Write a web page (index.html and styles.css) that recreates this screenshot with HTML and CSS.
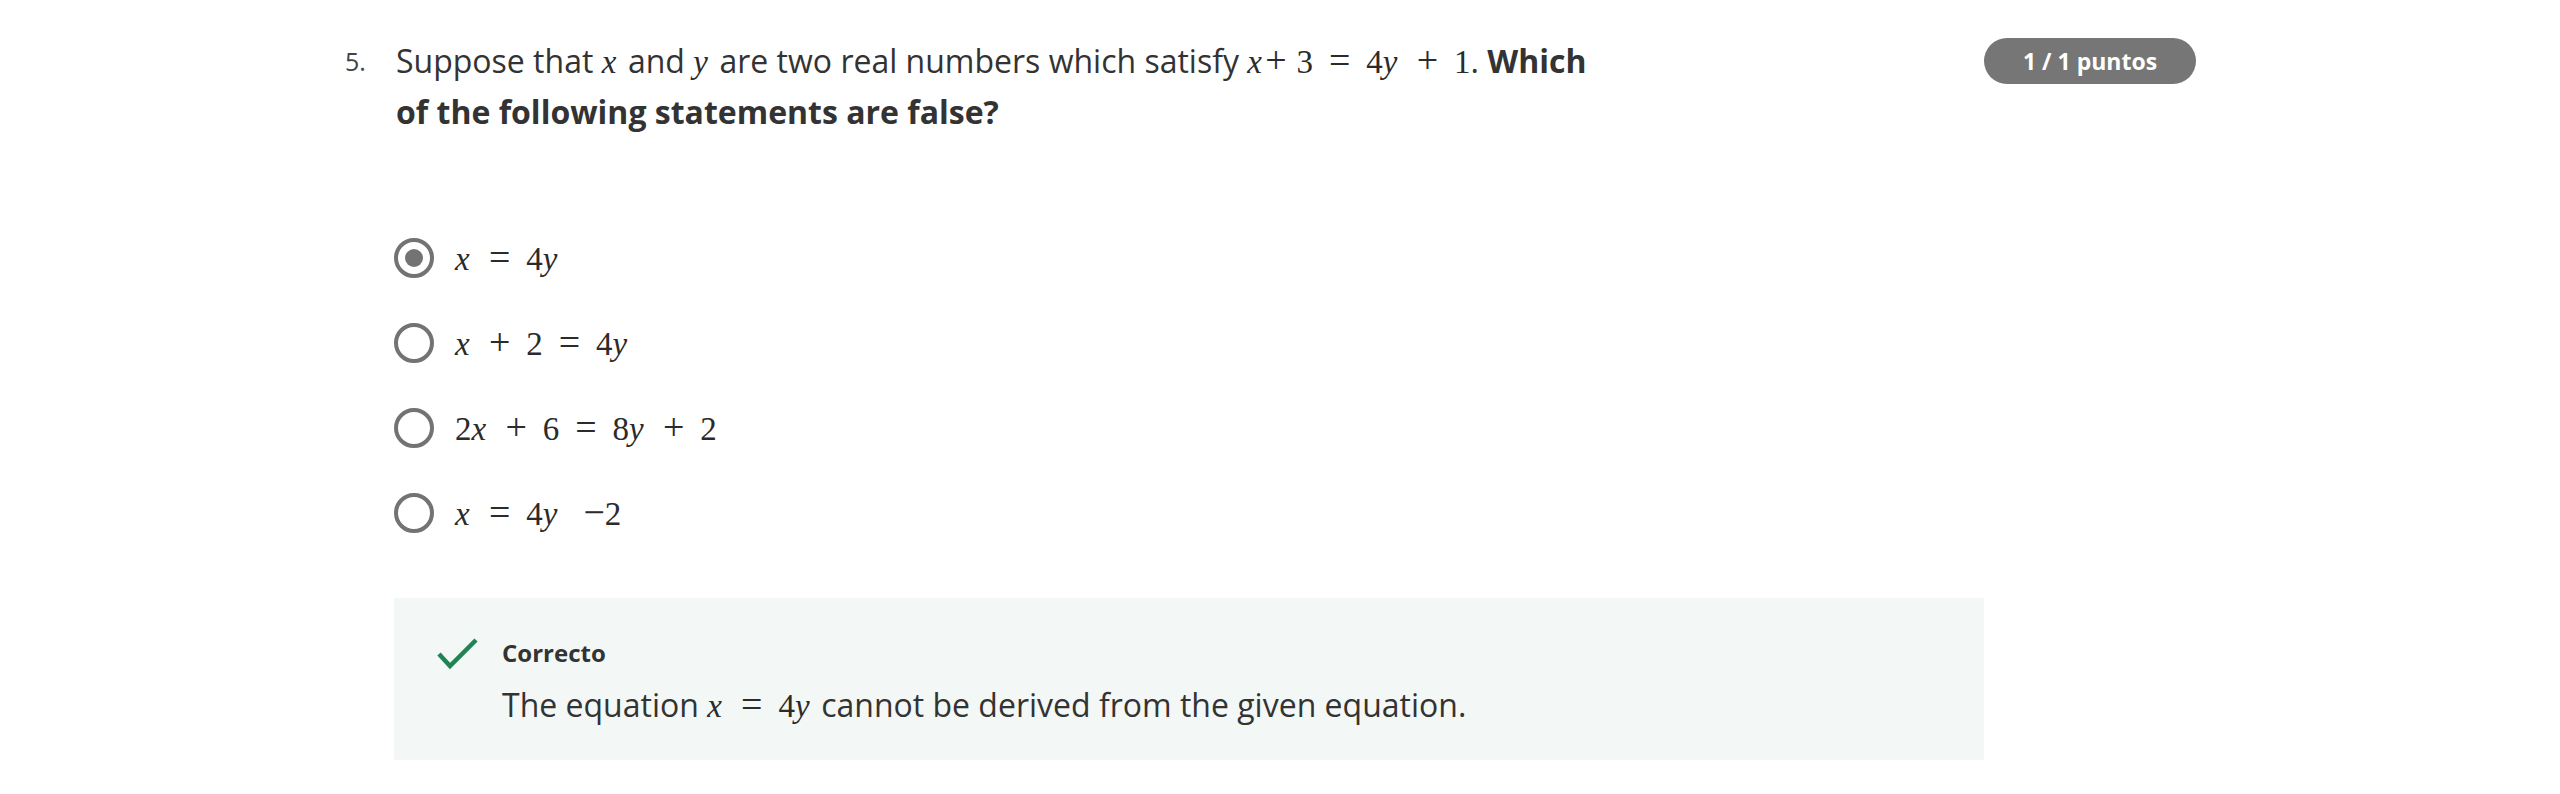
FILE: index.html
```html
<!DOCTYPE html>
<html lang="en">
<head>
<meta charset="utf-8">
<title>Question 5</title>
<link rel="stylesheet" href="styles.css">
</head>
<body>
<div class="question">
  <div class="qnum">5.</div>
  <div class="qbody">
    <p class="prompt">Suppose that <span class="math"><span class="mi">x</span></span> and <span class="math"><span class="mi">y</span></span> are two real numbers which satisfy <span class="math"><span class="mi">x</span><span class="mo">+</span><span class="sp"></span><span class="mn">3</span><span class="rel">=</span><span class="mn">4</span><span class="mi">y</span><span class="bin">+</span><span class="mn">1</span></span>. <strong>Which of the following statements are false?</strong></p>

    <ul class="options">
      <li class="option"><span class="radio checked"></span><span class="math opt"><span class="mi">x</span><span class="rel">=</span><span class="mn">4</span><span class="mi">y</span></span></li>
      <li class="option"><span class="radio"></span><span class="math opt"><span class="mi">x</span><span class="bin">+</span><span class="mn">2</span><span class="rel">=</span><span class="mn">4</span><span class="mi">y</span></span></li>
      <li class="option"><span class="radio"></span><span class="math opt"><span class="mn">2</span><span class="mi">x</span><span class="bin">+</span><span class="mn">6</span><span class="rel">=</span><span class="mn">8</span><span class="mi">y</span><span class="bin">+</span><span class="mn">2</span></span></li>
      <li class="option"><span class="radio"></span><span class="math opt"><span class="mi">x</span><span class="rel">=</span><span class="mn">4</span><span class="mi">y</span><span class="unary">&minus;</span><span class="mn">2</span></span></li>
    </ul>

    <div class="feedback">
      <svg class="check" width="42" height="32" viewBox="0 0 42 32" aria-hidden="true">
        <path d="M2 16 L13 28 L39 2" fill="none" stroke="#1f8354" stroke-width="4.5"/>
      </svg>
      <div class="fb-text">
        <div class="fb-title">Correcto</div>
        <p class="fb-body">The equation <span class="math fbm"><span class="mi">x</span><span class="rel">=</span><span class="mn">4</span><span class="mi">y</span></span> cannot be derived from the given equation.</p>
      </div>
    </div>
  </div>
  <div class="qside">
    <span class="badge">1 / 1 puntos</span>
  </div>
</div>
</body>
</html>
```
FILE: styles.css
```css
html, body {
  margin: 0;
  padding: 0;
  background: #ffffff;
}
body {
  font-family: "Open Sans", "Noto Sans", sans-serif;
  color: #333333;
}
.question {
  display: grid;
  grid-template-columns: 49px 1590px 212px;
  margin-left: 345px;
  padding-top: 36px;
}
.qnum {
  font-size: 25px;
  line-height: 50px;
  color: #444444;
}
.prompt {
  margin: 0;
  max-width: 1225px;
  font-size: 32px;
  line-height: 50px;
  padding-left: 2px;
}
.prompt strong {
  font-weight: 700;
}
.math {
  font-family: "Liberation Serif", "Times New Roman", serif;
  white-space: nowrap;
  color: #2b2b2b;
}
.prompt .math {
  font-size: 33px;
}
.mi {
  font-style: italic;
  margin-right: 0.1em;
}
.rel, .bin, .mo, .unary {
  font-size: 1.15em;
  line-height: 1;
}
.rel, .bin {
  margin: 0 0.42em;
}
.sp {
  display: inline-block;
  width: 0.3em;
}
.unary {
  margin-left: 0.6em;
}
.options {
  list-style: none;
  margin: 101px 0 0 0;
  padding: 0;
  display: flex;
  flex-direction: column;
  gap: 45px;
}
.option {
  display: flex;
  align-items: center;
  gap: 21px;
  height: 40px;
}
.radio {
  box-sizing: border-box;
  width: 40px;
  height: 40px;
  border: 4px solid #737373;
  border-radius: 50%;
  display: flex;
  align-items: center;
  justify-content: center;
  flex: none;
}
.radio.checked::after {
  content: "";
  width: 18px;
  height: 18px;
  border-radius: 50%;
  background: #737373;
}
.opt {
  font-size: 33px;
}
.feedback {
  margin-top: 65px;
  background: #f3f8f6;
  height: 162px;
  box-sizing: border-box;
  display: flex;
  padding: 40px 0 0 43px;
  gap: 23px;
}
.check {
  flex: none;
}
.fb-title {
  font-size: 24px;
  font-weight: 700;
  line-height: 30px;
}
.fb-body {
  margin: 17px 0 0 0;
  font-size: 32px;
  line-height: 40px;
}
.fbm {
  font-size: 33px;
}
.qside {
  padding-top: 2px;
}
.badge {
  display: flex;
  align-items: center;
  justify-content: center;
  width: 212px;
  height: 46px;
  border-radius: 23px;
  background: #767676;
  color: #ffffff;
  font-size: 23px;
  font-weight: 700;
}
```
